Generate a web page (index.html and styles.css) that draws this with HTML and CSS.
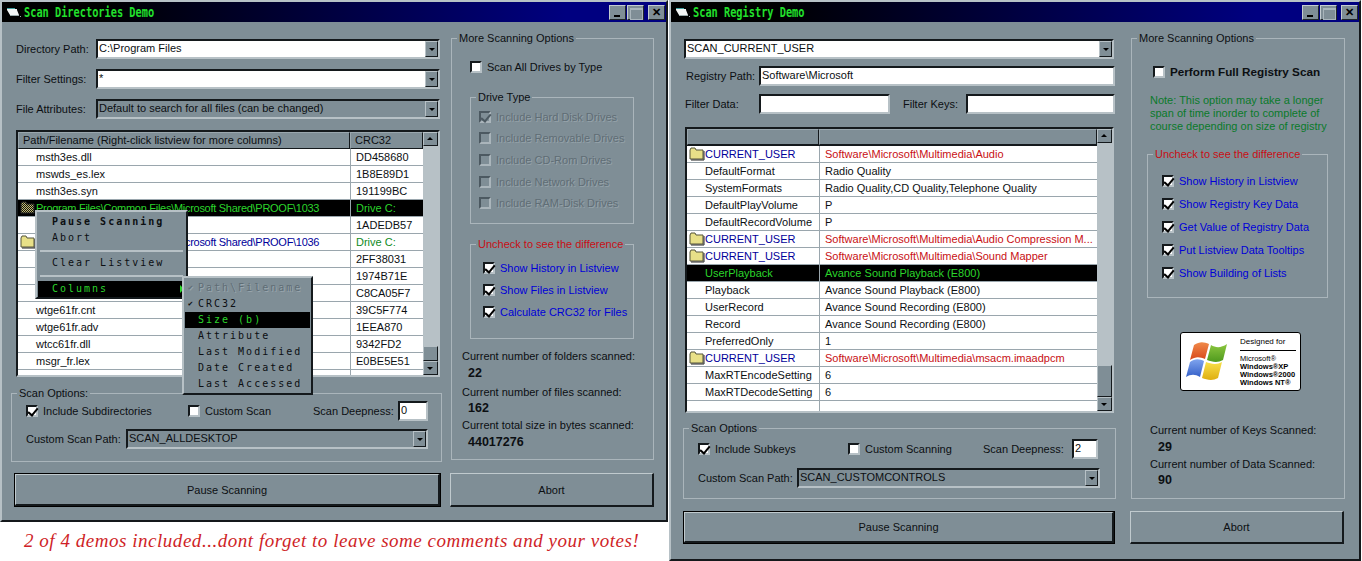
FILE: index.html
```html
<!DOCTYPE html>
<html>

<head>
    <title>Scan Demos</title>
    <link rel="stylesheet" href="styles.css">
</head>

<body>
    <svg class="defs" width="0" height="0">
        <symbol id="folder" viewBox="0 0 16 14">
            <path d="M1 3 L2 1 H6 L7 3 H14 V12 H1 Z" fill="#e8e088" stroke="#55553a"/>
            <path d="M15 4 V13 H2" fill="none" stroke="#222"/>
        </symbol>
        <symbol id="folder-sel" viewBox="0 0 16 14">
            <pattern id="dither" width="2" height="2" patternUnits="userSpaceOnUse">
                <rect width="2" height="2" fill="#111"/>
                <rect width="1" height="1" fill="#c8c070"/>
                <rect x="1" y="1" width="1" height="1" fill="#c8c070"/>
            </pattern>
            <path d="M1 3 L2 1 H6 L7 3 H14 V12 H1 Z" fill="url(#dither)" stroke="#222"/>
        </symbol>
        <symbol id="appicon" viewBox="0 0 14 11">
            <path d="M0 1 H5 L6 2 H10 V3 L12 8 H3 L0 3 Z" fill="#f2f4f4"/>
            <path d="M0 1 H8 V2 H0 Z" fill="#3fa0a0"/>
            <path d="M3 8 H12 V9 H3 Z M13 9 H14 V10 H13 Z" fill="#9aa"/>
        </symbol>
    </svg>

    <!-- left window -->
    <div class="win win-dir">
        <div class="titlebar">
            <svg class="appicon"><use href="#appicon"/></svg>
            <span class="title-text">Scan Directories Demo</span>
            <div class="title-btns">
                <span class="tbtn tbtn-min"></span>
                <span class="tbtn tbtn-max"></span>
                <span class="tbtn tbtn-close">✕</span>
            </div>
        </div>
        <div class="win-body dir-body">
            <div class="col-main">
                <div class="form-row dir-row">
                    <label class="dir-label">Directory Path:</label>
                    <div class="combo"><span class="combo-text">C:\Program Files</span><span class="drop"></span></div>
                </div>
                <div class="form-row dir-row">
                    <label class="dir-label">Filter Settings:</label>
                    <div class="combo"><span class="combo-text">*</span><span class="drop"></span></div>
                </div>
                <div class="form-row dir-row dir-row-last">
                    <label class="dir-label">File Attributes:</label>
                    <div class="combo combo-off"><span class="combo-text">Default to search for all files (can be changed)</span><span class="drop"></span></div>
                </div>

                <div class="list list-dir">
                    <div class="list-main">
                        <div class="list-head"><span>Path/Filename (Right-click listview for more columns)</span><span>CRC32</span></div>
                        <div class="row"><span class="name">msth3es.dll</span><span>DD458680</span></div>
                        <div class="row"><span class="name">mswds_es.lex</span><span>1B8E89D1</span></div>
                        <div class="row"><span class="name">msth3es.syn</span><span>191199BC</span></div>
                        <div class="row row-sel"><span class="name name-path"><svg class="folder"><use href="#folder-sel"/></svg>Program Files\Common Files\Microsoft Shared\PROOF\1033</span><span>Drive C:</span></div>
                        <div class="row"><span class="name">msgr3fr.dll</span><span>1ADEDB57</span></div>
                        <div class="row"><span class="name name-blue name-path"><svg class="folder"><use href="#folder"/></svg>Program Files\Common Files\Microsoft Shared\PROOF\1036</span><span class="green">Drive C:</span></div>
                        <div class="row"><span class="name">msth3fr.dll</span><span>2FF38031</span></div>
                        <div class="row"><span class="name">mswds_fr.lex</span><span>1974B71E</span></div>
                        <div class="row"><span class="name">wtge61fr.hlp</span><span>C8CA05F7</span></div>
                        <div class="row"><span class="name">wtge61fr.cnt</span><span>39C5F774</span></div>
                        <div class="row"><span class="name">wtge61fr.adv</span><span>1EEA870</span></div>
                        <div class="row"><span class="name">wtcc61fr.dll</span><span>9342FD2</span></div>
                        <div class="row"><span class="name">msgr_fr.lex</span><span>E0BE5E51</span></div>
                        <div class="row row-blank"><span></span><span></span></div>
                    </div>
                    <div class="scroll">
                        <span class="sbtn sbtn-up"></span>
                        <span class="strack"></span>
                        <span class="sthumb thumb-dir"></span>
                        <span class="sbtn sbtn-down"></span>
                    </div>
                </div>

                <fieldset class="group opts opts-dir">
                    <legend>Scan Options:</legend>
                    <div class="opts-grid">
                        <div class="check"><span class="chk on"></span>Include Subdirectories</div>
                        <div class="check"><span class="chk"></span>Custom Scan</div>
                        <label>Scan Deepness:</label>
                        <div class="edit">0</div>
                    </div>
                    <div class="path-row">
                        <label>Custom Scan Path:</label>
                        <div class="combo combo-off"><span class="combo-text">SCAN_ALLDESKTOP</span><span class="drop"></span></div>
                    </div>
                </fieldset>
            </div>

            <fieldset class="group side side-dir">
                <legend>More Scanning Options</legend>
                <div class="check check-all"><span class="chk"></span>Scan All Drives by Type</div>
                <fieldset class="group drives">
                    <legend>Drive Type</legend>
                    <div class="check check-off"><span class="chk on"></span>Include Hard Disk Drives</div>
                    <div class="check check-off"><span class="chk"></span>Include Removable Drives</div>
                    <div class="check check-off"><span class="chk"></span>Include CD-Rom Drives</div>
                    <div class="check check-off"><span class="chk"></span>Include Network Drives</div>
                    <div class="check check-off"><span class="chk"></span>Include RAM-Disk Drives</div>
                </fieldset>
                <fieldset class="group diff diff-dir">
                    <legend class="red">Uncheck to see the difference</legend>
                    <div class="check blue"><span class="chk on"></span>Show History in Listview</div>
                    <div class="check blue"><span class="chk on"></span>Show Files in Listview</div>
                    <div class="check blue"><span class="chk on"></span>Calculate CRC32 for Files</div>
                </fieldset>
                <div class="stats stats-dir">
                    <div>Current number of folders scanned:</div>
                    <div class="stat-val">22</div>
                    <div class="stat-gap">Current number of files scanned:</div>
                    <div class="stat-val stat-val-mid">162</div>
                    <div class="stat-gap stat-gap-tight">Current total size in bytes scanned:</div>
                    <div class="stat-val">44017276</div>
                </div>
            </fieldset>

            <button class="btn btn-default btn-pause-dir">Pause Scanning</button>
            <button class="btn btn-abort btn-abort-dir">Abort</button>
        </div>

        <div class="menu menu-main">
            <div class="mi mi-bold">Pause Scanning</div>
            <div class="mi">Abort</div>
            <div class="msep"></div>
            <div class="mi">Clear Listview</div>
            <div class="msep msep-last"></div>
            <div class="mi mi-sel">Columns<span class="marrow"></span></div>
        </div>
        <div class="menu menu-sub">
            <div class="mi mi-off"><span class="mcheck">✔</span>Path\Filename</div>
            <div class="mi"><span class="mcheck">✔</span>CRC32</div>
            <div class="mi mi-sel">Size (b)</div>
            <div class="mi">Attribute</div>
            <div class="mi">Last Modified</div>
            <div class="mi">Date Created</div>
            <div class="mi">Last Accessed</div>
        </div>
    </div>

    <div class="caption">2 of 4 demos included...dont forget to leave some comments and your votes!</div>

    <!-- right window -->
    <div class="win win-reg">
        <div class="titlebar">
            <svg class="appicon"><use href="#appicon"/></svg>
            <span class="title-text">Scan Registry Demo</span>
            <div class="title-btns">
                <span class="tbtn tbtn-min"></span>
                <span class="tbtn tbtn-max"></span>
                <span class="tbtn tbtn-close">✕</span>
            </div>
        </div>
        <div class="win-body reg-body">
            <div class="col-main">
                <div class="combo combo-hive"><span class="combo-text">SCAN_CURRENT_USER</span><span class="drop"></span></div>
                <div class="form-row reg-path">
                    <label class="reg-label">Registry Path:</label>
                    <div class="edit edit-grow">Software\Microsoft</div>
                </div>
                <div class="form-row reg-filter">
                    <label class="reg-label">Filter Data:</label>
                    <div class="edit edit-data"></div>
                    <label class="keys-label">Filter Keys:</label>
                    <div class="edit edit-grow"></div>
                </div>

                <div class="list list-reg">
                    <div class="list-main">
                        <div class="list-head"><span></span><span></span></div>
                        <div class="row"><span class="name name-blue"><svg class="folder"><use href="#folder"/></svg>CURRENT_USER</span><span class="red">Software\Microsoft\Multimedia\Audio</span></div>
                        <div class="row"><span class="name">DefaultFormat</span><span>Radio Quality</span></div>
                        <div class="row"><span class="name">SystemFormats</span><span>Radio Quality,CD Quality,Telephone Quality</span></div>
                        <div class="row"><span class="name">DefaultPlayVolume</span><span>P</span></div>
                        <div class="row"><span class="name">DefaultRecordVolume</span><span>P</span></div>
                        <div class="row"><span class="name name-blue"><svg class="folder"><use href="#folder"/></svg>CURRENT_USER</span><span class="red">Software\Microsoft\Multimedia\Audio Compression M...</span></div>
                        <div class="row"><span class="name name-blue"><svg class="folder"><use href="#folder"/></svg>CURRENT_USER</span><span class="red">Software\Microsoft\Multimedia\Sound Mapper</span></div>
                        <div class="row row-sel"><span class="name">UserPlayback</span><span>Avance Sound Playback (E800)</span></div>
                        <div class="row"><span class="name">Playback</span><span>Avance Sound Playback (E800)</span></div>
                        <div class="row"><span class="name">UserRecord</span><span>Avance Sound Recording (E800)</span></div>
                        <div class="row"><span class="name">Record</span><span>Avance Sound Recording (E800)</span></div>
                        <div class="row"><span class="name">PreferredOnly</span><span>1</span></div>
                        <div class="row"><span class="name name-blue"><svg class="folder"><use href="#folder"/></svg>CURRENT_USER</span><span class="red">Software\Microsoft\Multimedia\msacm.imaadpcm</span></div>
                        <div class="row"><span class="name">MaxRTEncodeSetting</span><span>6</span></div>
                        <div class="row"><span class="name">MaxRTDecodeSetting</span><span>6</span></div>
                        <div class="row row-blank"><span></span><span></span></div>
                    </div>
                    <div class="scroll">
                        <span class="sbtn sbtn-up"></span>
                        <span class="strack"></span>
                        <span class="sthumb thumb-reg"></span>
                        <span class="sbtn sbtn-down"></span>
                    </div>
                </div>

                <fieldset class="group opts opts-reg">
                    <legend>Scan Options</legend>
                    <div class="opts-grid">
                        <div class="check"><span class="chk on"></span>Include Subkeys</div>
                        <div class="check"><span class="chk"></span>Custom Scanning</div>
                        <label>Scan Deepness:</label>
                        <div class="edit">2</div>
                    </div>
                    <div class="path-row">
                        <label>Custom Scan Path:</label>
                        <div class="combo combo-off"><span class="combo-text">SCAN_CUSTOMCONTROLS</span><span class="drop"></span></div>
                    </div>
                </fieldset>
            </div>

            <fieldset class="group side side-reg">
                <legend>More Scanning Options</legend>
                <div class="check check-full"><span class="chk"></span>Perform Full Registry Scan</div>
                <div class="note">Note: This option may take a longer<br>span of time inorder to complete of<br>course depending on size of registry</div>
                <fieldset class="group diff diff-reg">
                    <legend class="red">Uncheck to see the difference</legend>
                    <div class="check blue"><span class="chk on"></span>Show History in Listview</div>
                    <div class="check blue"><span class="chk on"></span>Show Registry Key Data</div>
                    <div class="check blue"><span class="chk on"></span>Get Value of Registry Data</div>
                    <div class="check blue"><span class="chk on"></span>Put Listview Data Tooltips</div>
                    <div class="check blue"><span class="chk on"></span>Show Building of Lists</div>
                </fieldset>
                <div class="logo">
                    <svg class="flag" viewBox="0 0 46 42">
                        <defs>
                            <linearGradient id="fr" x1="0" y1="0" x2="0" y2="1"><stop offset="0" stop-color="#f08a4a"/><stop offset="1" stop-color="#d8481a"/></linearGradient>
                            <linearGradient id="fg" x1="0" y1="0" x2="0" y2="1"><stop offset="0" stop-color="#8cc63f"/><stop offset="1" stop-color="#4f9a1e"/></linearGradient>
                            <linearGradient id="fb" x1="0" y1="0" x2="0" y2="1"><stop offset="0" stop-color="#7fa4ee"/><stop offset="1" stop-color="#3560c8"/></linearGradient>
                            <linearGradient id="fy" x1="0" y1="0" x2="0" y2="1"><stop offset="0" stop-color="#f8e04a"/><stop offset="1" stop-color="#dfae10"/></linearGradient>
                        </defs>
                        <path d="M9 4 C15 0 19 1 24 3 L20 18 C15 16 11 15 5 19 Z" fill="url(#fr)"/>
                        <path d="M26 4 C31 7 36 7 42 3 L38 19 C33 22 27 21 22 19 Z" fill="url(#fg)"/>
                        <path d="M5 21 C10 17 15 18 19 20 L15 36 C10 33 6 33 1 36 Z" fill="url(#fb)"/>
                        <path d="M21 21 C26 23 32 24 37 21 L33 37 C28 40 22 39 17 37 Z" fill="url(#fy)"/>
                    </svg>
                    <div class="logo-text">
                        <div class="logo-head">Designed for</div>
                        <div class="logo-ms">Microsoft®</div>
                        <div>Windows®XP</div>
                        <div>Windows®2000</div>
                        <div>Windows NT®</div>
                    </div>
                </div>
                <div class="stats stats-reg">
                    <div>Current number of Keys Scanned:</div>
                    <div class="stat-val">29</div>
                    <div class="stat-gap">Current number of Data Scanned:</div>
                    <div class="stat-val stat-val-mid">90</div>
                </div>
            </fieldset>

            <button class="btn btn-default btn-pause-reg">Pause Scanning</button>
            <button class="btn btn-abort btn-abort-reg">Abort</button>
        </div>
    </div>
</body>

</html>
```

FILE: styles.css
```css
* {
    box-sizing: border-box;
}

html, body {
    margin: 0;
    height: 561px;
    overflow: hidden;
    background: #fff;
}

body {
    position: relative;
    font-family: "Liberation Sans", sans-serif;
    font-size: 11px;
    line-height: 14px;
    color: #0c0f12;
}

.defs {
    position: absolute;
}

/* windows */
.win {
    position: absolute;
    top: 0;
    background: #7f8e96;
    border: 2px solid;
    border-color: #b7c1c6 #14181b #14181b #b7c1c6;
}

.win-dir {
    left: 0;
    width: 668px;
    height: 522px;
}

.win-reg {
    left: 669px;
    width: 692px;
    height: 561px;
}

.titlebar {
    display: flex;
    align-items: center;
    height: 20px;
    padding-left: 5px;
    background: linear-gradient(to right, #000 0%, #000 15%, #000080 85%);
}

.appicon {
    flex: none;
    width: 14px;
    height: 11px;
    margin-right: 3px;
}

.title-text {
    font-family: "DejaVu Sans Mono", monospace;
    font-weight: bold;
    font-size: 14px;
    color: #22e02c;
    white-space: nowrap;
    transform: scaleX(0.735);
    transform-origin: left center;
}

.title-btns {
    display: flex;
    margin-left: auto;
    margin-right: 1px;
    gap: 1px;
}

.tbtn {
    position: relative;
    width: 17px;
    height: 15px;
    background: #7f8e96;
    border: 1px solid;
    border-color: #c3ccd0 #20262a #20262a #c3ccd0;
    font-size: 11px;
    line-height: 13px;
    font-weight: bold;
    text-align: center;
    color: #000;
}

.tbtn-close {
    margin-left: 3px;
}

.tbtn-min::after {
    content: "";
    position: absolute;
    left: 4px;
    bottom: 2px;
    width: 6px;
    height: 2px;
    background: #000;
}

.tbtn-max::after {
    content: "";
    position: absolute;
    left: 2px;
    top: 2px;
    width: 11px;
    height: 9px;
    border: 1px solid #a9b5bb;
    border-top-width: 2px;
}

.win-body {
    display: grid;
    padding-top: 10px;
    row-gap: 0;
}

.dir-body {
    grid-template-columns: 431px 203px;
    column-gap: 9px;
    padding-left: 9px;
}

.reg-body {
    grid-template-columns: 433px 214px;
    column-gap: 15px;
    padding-left: 12px;
}

.col-main {
    padding-top: 7px;
}

/* form rows */
.form-row {
    display: flex;
    align-items: center;
    height: 20px;
}

.form-row label {
    white-space: nowrap;
}

.dir-row {
    margin: 0 2px 10px 5px;
}

.dir-row-last {
    margin-bottom: 11px;
}

.dir-label {
    width: 80px;
}

.combo {
    position: relative;
    flex: 1;
    height: 20px;
    background: #fff;
    border: 2px solid;
    border-color: #14191c #b7c1c6 #b7c1c6 #14191c;
    padding-left: 1px;
    line-height: 15px;
    white-space: nowrap;
}

.combo-off {
    background: #7f8e96;
}

.drop {
    position: absolute;
    right: 0;
    top: 0;
    width: 13px;
    height: 16px;
    background: #7f8e96;
    border: 1px solid;
    border-color: #b7c1c6 #14191c #14191c #b7c1c6;
}

.drop::after, .sbtn::after {
    content: "";
    position: absolute;
    left: 3px;
    top: 6px;
    border: 3px solid transparent;
    border-top-color: #000;
    border-bottom-width: 0;
}

.combo-hive {
    flex: none;
    margin-left: 1px;
    width: 430px;
}

.reg-path {
    margin: 7px 1px 0 3px;
}

.reg-filter {
    margin: 8px 1px 0 2px;
}

.reg-label {
    width: 73px;
}

.reg-filter .reg-label {
    width: 74px;
}

.keys-label {
    margin-left: 13px;
    width: 63px;
}

.edit {
    height: 20px;
    background: #fff;
    border: 2px solid;
    border-color: #14191c #b7c1c6 #b7c1c6 #14191c;
    padding-left: 1px;
    line-height: 15px;
}

.edit-grow {
    flex: 1;
}

.edit-data {
    width: 131px;
}

/* listview */
.list {
    display: flex;
    background: #fff;
    border: 2px solid;
    border-color: #14191c #b7c1c6 #b7c1c6 #14191c;
}

.list-dir {
    margin-left: 5px;
    width: 424px;
    height: 247px;
}

.list-reg {
    margin: 13px 0 0 2px;
    width: 429px;
    height: 286px;
}

.list-main {
    flex: 1;
    display: flex;
    flex-direction: column;
    min-width: 0;
}

.list-head, .row {
    display: grid;
}

.list-dir .list-head, .list-dir .row {
    grid-template-columns: 332px 1fr;
}

.list-reg .list-head, .list-reg .row {
    grid-template-columns: 132px 1fr;
}

.list-head {
    height: 17px;
    background: #7f8e96;
    border-bottom: 1px solid #14191c;
    line-height: 15px;
}

.list-head span {
    padding-left: 4px;
    border: 1px solid;
    border-color: #9aa7ae #14191c #14191c #9aa7ae;
}

.row {
    height: 17px;
    flex: none;
    border-bottom: 1px solid #9aa6ad;
    line-height: 16px;
    white-space: nowrap;
}

.row span + span {
    padding-left: 5px;
    border-left: 1px solid #9aa6ad;
}

.row-blank {
    flex: 1;
    border-bottom: 0;
}

.name {
    display: flex;
    align-items: center;
    padding-left: 18px;
    position: relative;
}

.name-path {
    letter-spacing: -0.28px;
}

.folder {
    position: absolute;
    left: 2px;
    top: 1px;
    width: 16px;
    height: 14px;
}

.row-sel {
    background: #000;
    color: #2bd52b;
}

.name-blue {
    color: #00009a;
}

.red {
    color: #c80f14;
}

.green {
    color: #0f8a1e;
}

.blue {
    color: #0000d8;
}

.scroll {
    position: relative;
    flex: none;
    width: 15px;
    display: flex;
    flex-direction: column;
    background: #b7c1c6;
}

.sbtn {
    position: relative;
    height: 14px;
    flex: none;
    background: #7f8e96;
    border: 1px solid;
    border-color: #b7c1c6 #14191c #14191c #b7c1c6;
}

.sbtn-up::after {
    border-top-width: 0;
    border-bottom: 3px solid #000;
    top: 4px;
}

.sbtn-down::after {
    top: 5px;
}

.strack {
    flex: 1;
}

.sthumb {
    flex: none;
    background: #7f8e96;
    border: 1px solid;
    border-color: #b7c1c6 #14191c #14191c #b7c1c6;
}

.thumb-dir {
    height: 15px;
}

.thumb-reg {
    height: 32px;
}

/* group boxes */
.group {
    margin: 0;
    padding: 0;
    min-width: 0;
    border: 1px solid #aab5bb;
}

.group legend {
    padding: 0 2px;
    margin-left: 5px;
    line-height: 13px;
    height: 13px;
    white-space: nowrap;
}

.check {
    display: flex;
    align-items: center;
    white-space: nowrap;
}

.chk {
    position: relative;
    flex: none;
    width: 12px;
    height: 12px;
    margin-right: 5px;
    background: #fff;
    border: 2px solid;
    border-color: #14191c #b7c1c6 #b7c1c6 #14191c;
}

.chk.on::after {
    content: "";
    position: absolute;
    left: 2px;
    top: -1px;
    width: 4px;
    height: 8px;
    border: solid #000;
    border-width: 0 2px 2px 0;
    transform: rotate(40deg);
}

.check-off {
    height: 21.6px;
    color: #5f6d75;
    text-shadow: 1px 1px 0 #96a3aa;
    padding-left: 8px;
}

.check-off .chk {
    background: transparent;
    border-color: #4c5961 #aab5bb #aab5bb #4c5961;
}

.check-off .chk.on::after {
    border-color: #4c5961;
}

/* scan options */
.opts {
    margin-top: 10px;
}

.opts-dir {
    height: 75px;
    padding-top: 1px;
}

.opts-dir .path-row {
    margin-top: 8px;
}

.opts-reg {
    margin-top: 9px;
    height: 77px;
    padding-top: 4px;
}

.opts-reg .path-row {
    margin-top: 9px;
}

.opts-grid {
    display: grid;
    align-items: center;
    height: 20px;
    margin-left: 14px;
}

.opts-grid label, .path-row label {
    white-space: nowrap;
}

.opts-dir .opts-grid {
    grid-template-columns: 162px 125px 85px 30px;
}

.opts-reg .opts-grid {
    grid-template-columns: 150px 135px 89px 26px;
}

.path-row {
    display: flex;
    align-items: center;
    margin-left: 14px;
}

.opts-dir .path-row label {
    width: 100px;
}

.opts-dir .path-row .combo {
    flex: none;
    width: 302px;
}

.opts-reg .path-row label {
    width: 99px;
}

.opts-reg .path-row .combo {
    flex: none;
    width: 303px;
}

/* side column */
.side-dir {
    height: 428px;
}

.side-reg {
    height: 467px;
}

.check-all {
    margin: 15px 0 0 18px;
}

.drives {
    margin: 17px 0 0 18px;
    width: 164px;
    height: 133px;
    padding-top: 2px;
}

.diff-dir {
    margin: 14px 0 0 18px;
    width: 164px;
    height: 101px;
    padding-top: 6px;
}

.diff-dir .check {
    height: 22px;
    margin-left: 12px;
}

.check-full {
    margin: 20px 0 0 21px;
    font-weight: bold;
    font-size: 11.7px;
}

.note {
    margin: 15px 0 0 18px;
    color: #0a7a2a;
    line-height: 13px;
    white-space: nowrap;
}

.diff-reg {
    margin: 15px 0 0 15px;
    width: 181px;
    height: 150px;
    padding-top: 8px;
}

.diff-reg .check {
    height: 23px;
    margin-left: 14px;
}

.stats-dir {
    margin: 10px 0 0 10px;
}

.stats-reg {
    margin: 32px 0 0 18px;
}

.stat-val {
    margin: 3px 0 0 6px;
    font-weight: bold;
    font-size: 12.5px;
}

.stat-val-mid {
    margin-top: 2px;
}

.stats-reg .stat-val {
    margin-left: 8px;
}

.stat-gap {
    margin-top: 5px;
}

.stat-gap-tight, .stats-reg .stat-gap {
    margin-top: 3px;
}

/* logo */
.logo {
    display: flex;
    align-items: center;
    margin: 34px 0 0 48px;
    width: 121px;
    height: 59px;
    padding: 0 4px;
    background: #fff;
    border: 1px solid #000;
    border-radius: 3px;
    color: #000;
}

.flag {
    flex: none;
    width: 46px;
    height: 42px;
    margin-right: 9px;
}

.logo-text {
    flex: 1;
    font-size: 7.5px;
    line-height: 8px;
    font-weight: bold;
    white-space: nowrap;
}

.logo-head {
    font-weight: normal;
    font-size: 8px;
    padding-bottom: 3px;
    margin-bottom: 4px;
    border-bottom: 1px solid #000;
    line-height: 10px;
}

.logo-ms {
    font-weight: normal;
}

/* buttons */
.btn {
    font: inherit;
    color: inherit;
    background: #7f8e96;
    padding: 0;
    border: 2px solid;
    border-color: #c0cace #14191c #14191c #c0cace;
    border-left-width: 1px;
    border-top-width: 1px;
}

.btn-default {
    outline: 1px solid #000;
    outline-offset: -1px;
    border-width: 2px 3px 3px 2px;
}

.btn-pause-dir {
    margin: 11px 0 0 3px;
    width: 427px;
    height: 34px;
}

.btn-abort-dir {
    margin: 11px 0 0 -1px;
    width: 204px;
    height: 34px;
}

.btn-pause-reg {
    margin-top: 12px;
    width: 432px;
    height: 33px;
}

.btn-abort-reg {
    margin: 12px 0 0 -1px;
    width: 214px;
    height: 33px;
}

/* context menus */
.menu {
    position: absolute;
    background: #7f8e96;
    border: 2px solid;
    border-color: #b7c1c6 #14191c #14191c #b7c1c6;
    font-family: "DejaVu Sans Mono", monospace;
    font-size: 10px;
    letter-spacing: 2px;
    color: #0c0f12;
}

.menu-main {
    left: 33px;
    top: 208px;
    width: 153px;
    height: 89px;
    padding: 2px 1px;
}

.menu-sub {
    left: 180px;
    top: 274px;
    width: 131px;
    height: 119px;
    padding: 2px 1px;
}

.mi {
    position: relative;
    height: 16px;
    line-height: 16px;
    padding-left: 14px;
    white-space: nowrap;
}

.menu-sub .mi {
    padding-left: 13px;
}

.mi-bold {
    font-weight: bold;
}

.mi-off {
    color: #5f6d75;
    text-shadow: 1px 1px 0 #9aa7ae;
}

.mi-sel {
    background: #000;
    color: #2bd52b;
}

.msep {
    height: 2px;
    margin: 4px 2px 3px;
    background: #b7c1c6;
}

.msep-last {
    margin-bottom: 4px;
}

.mcheck {
    position: absolute;
    left: 3px;
    font-size: 8px;
    letter-spacing: 0;
}

.marrow {
    position: absolute;
    right: 1px;
    top: 4px;
    border: 4px solid transparent;
    border-left-color: #2bd52b;
    border-right-width: 0;
}

/* bottom note on the white background */
.caption {
    position: absolute;
    left: 24px;
    top: 527px;
    font-family: "Liberation Serif", serif;
    font-style: italic;
    font-size: 19px;
    line-height: 28px;
    letter-spacing: 0.53px;
    color: #cf1f28;
    white-space: nowrap;
}
```
